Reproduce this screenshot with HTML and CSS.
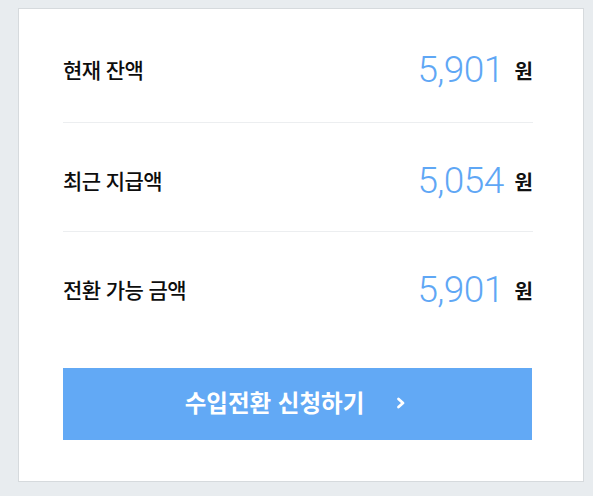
FILE: index.html
```html
<!DOCTYPE html>
<html lang="ko">
<head>
<meta charset="utf-8">
<link rel="stylesheet" href="styles.css">
</head>
<body>
<div class="card">
  <div class="row">
    <span class="label">현재 잔액</span>
    <span class="amount"><span class="num">5,901</span><span class="unit">원</span></span>
  </div>
  <div class="row">
    <span class="label">최근 지급액</span>
    <span class="amount"><span class="num">5,054</span><span class="unit">원</span></span>
  </div>
  <div class="row last">
    <span class="label">전환 가능 금액</span>
    <span class="amount"><span class="num">5,901</span><span class="unit">원</span></span>
  </div>
  <button class="btn" type="button">
    <span class="btn-text">수입전환 신청하기</span>
    <svg class="chev" width="10" height="12" viewBox="0 0 10 12"><polyline points="2.5,2 7,6 2.5,10" fill="none" stroke="#fff" stroke-width="2.8" stroke-linecap="round" stroke-linejoin="round"/></svg>
  </button>
</div>
</body>
</html>
```
FILE: styles.css
```css
html, body {
  margin: 0;
  padding: 0;
}
body {
  background: #e8ecef;
  font-family: "Noto Sans CJK KR", "Noto Sans", sans-serif;
  color: #111;
  padding: 8px 0 0 18px;
  height: 496px;
  box-sizing: border-box;
}
.card {
  width: 566px;
  height: 474px;
  box-sizing: border-box;
  background: #fff;
  border: 1px solid #d6dadd;
  padding: 4px 50px 0 44px;
  display: flex;
  flex-direction: column;
}
.row {
  display: flex;
  align-items: center;
  justify-content: space-between;
  height: 36px;
  padding: 40px 0 32px;
  border-bottom: 1px solid #eceef0;
}
.row:first-child {
  padding-top: 39px;
  padding-bottom: 34px;
}
.row.last {
  border-bottom: none;
}
.label {
  font-size: 21px;
  font-weight: 500;
  line-height: 36px;
  letter-spacing: -0.6px;
  color: #0d0d0d;
  margin-top: -3px;
}
.amount {
  display: flex;
  align-items: center;
}
.num {
  font-family: Roboto, "Noto Sans", sans-serif;
  font-weight: 300;
  font-size: 37px;
  line-height: 36px;
  color: #5fa7f5;
  letter-spacing: -0.6px;
  margin-right: 11px;
}
.unit {
  font-size: 20px;
  font-weight: 700;
  line-height: 36px;
  margin-top: 2px;
}
.btn {
  margin-top: 28px;
  height: 72px;
  width: 469px;
  border: none;
  background: #62a9f5;
  color: #fff;
  font-family: "Noto Sans CJK KR", "Noto Sans", sans-serif;
  font-size: 23.5px;
  font-weight: 700;
  display: flex;
  align-items: center;
  justify-content: center;
  gap: 32px;
  padding: 0 4px 0 0;
  cursor: pointer;
}
.btn-text {
  line-height: 1;
  margin-top: -2px;
}
.chev {
  display: block;
  margin-top: -3px;
}
```
